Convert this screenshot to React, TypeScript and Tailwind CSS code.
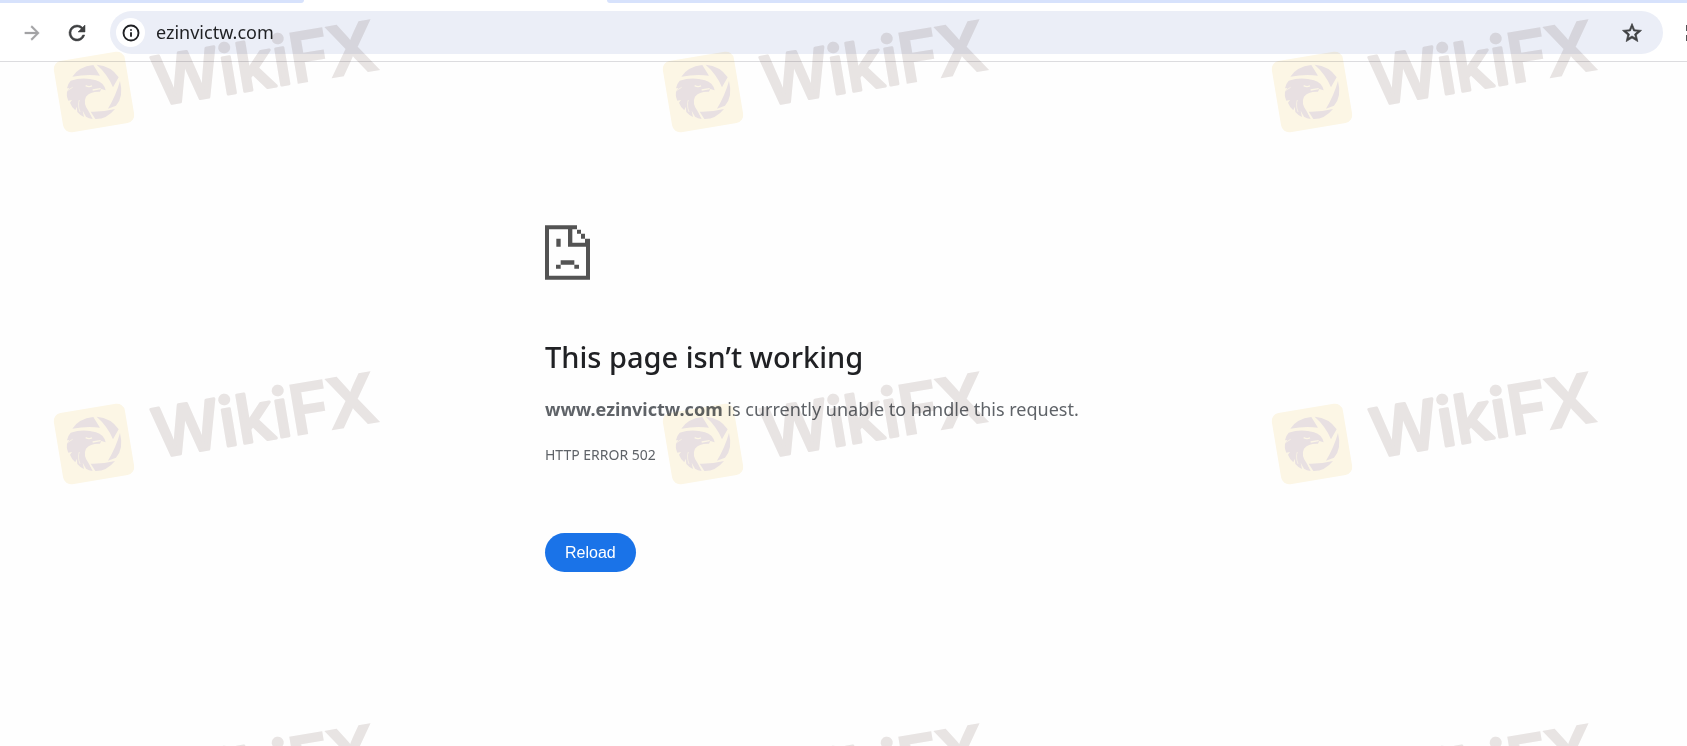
import { Info } from 'lucide-react';

function TabStrip() {
  return (
    <div className="flex h-[3px] bg-white">
      <div className="w-[18%] rounded-br-[20px] bg-[#d7e2fc]" />
      <div className="w-[18%]" />
      <div className="flex-1 rounded-bl-[20px] bg-[#d7e2fc]" />
    </div>
  );
}

function ToolbarIcon({ d, strokeWidth }: { d: string; strokeWidth: number }) {
  return (
    <svg viewBox="0 0 24 24" className="size-6" fill="currentColor" stroke="currentColor" strokeWidth={strokeWidth} aria-hidden="true">
      <path d={d} />
    </svg>
  );
}

function Toolbar() {
  return (
    <header className="flex items-center overflow-hidden border-b border-[#dcdcdf] bg-white pt-2 pb-[7px]">
      <button type="button" aria-label="Forward" className="ml-5 text-[#a3a3a5]">
        <ToolbarIcon strokeWidth={0.3} d="M12 4.6l-1.3 1.3 5.1 5.2H4.8v1.8h11l-5.1 5.2 1.3 1.3 7.4-7.4z" />
      </button>
      <button type="button" aria-label="Reload this page" className="ml-[21px] text-[#3f4042]">
        <ToolbarIcon
          strokeWidth={0.5}
          d="M17.65 6.35A7.96 7.96 0 0 0 12 4a8 8 0 1 0 7.73 10h-2.08A6 6 0 1 1 12 6c1.66 0 3.14.69 4.22 1.78L13 11h7V4z"
        />
      </button>
      <div className="ml-[21px] flex h-[43px] flex-1 items-center rounded-full bg-[#ebeef7] px-[6px]">
        <button type="button" aria-label="View site information" className="flex size-[29px] items-center justify-center rounded-full bg-white text-[#1f2023]">
          <Info size={18} strokeWidth={2.5} />
        </button>
        <input
          type="text"
          aria-label="Address"
          defaultValue="ezinvictw.com"
          className="ml-[11px] min-w-0 flex-1 bg-transparent text-[18px] text-[#1f2023] outline-none"
        />
        <button type="button" aria-label="Bookmark this page" className="mr-[13px] text-[#3f4042]">
          <ToolbarIcon
            strokeWidth={0.7}
            d="M21.5 9.4l-6.9-.6L12 2.5 9.4 8.8l-6.9.6 5.2 4.5-1.5 6.7L12 17l5.8 3.6-1.5-6.7zM12 15l-3.6 2.2 1-4.1-3.2-2.8 4.2-.4L12 6l1.6 3.9 4.2.4-3.2 2.8 1 4.1z"
          />
        </button>
      </div>
      <div className="ml-[23px] w-px">
        <div className="h-[6px] bg-[#55565a]" />
        <div className="mt-1 h-[6px] bg-[#55565a]" />
      </div>
    </header>
  );
}

function SadPageIcon() {
  return (
    <svg viewBox="0 0 135 163" className="h-[55px] w-[45px]" fill="#535353" aria-hidden="true">
      <path d="M0 0H96V13H108V25H120V40H135V163H0ZM12 12V151H123V64H69V12ZM82 12V52H120V40H108V25H96V12Z" fillRule="evenodd" />
      <path d="M34 40H47V64H34ZM47 105H88V118H102V130H88V118H47V130H33V118H47Z" />
    </svg>
  );
}

function ErrorPage() {
  return (
    <main className="mx-auto w-full max-w-[597px] pt-[163px]">
      <SadPageIcon />
      <h1 className="mt-[57px] text-[29px] leading-10 font-medium text-[#202124]">This page isn’t working</h1>
      <p className="mt-[18px] text-[18px] leading-7 text-[#5f6368]">
        <strong className="font-bold">www.ezinvictw.com</strong> is currently unable to handle this request.
      </p>
      <p className="mt-5 text-[14px] leading-6 text-[#5f6368]">HTTP ERROR 502</p>
      <button
        type="button"
        className="mt-[66px] h-[39px] rounded-full bg-[#1a73e8] px-5 font-['Liberation_Sans',sans-serif] text-[16px] text-white"
      >
        Reload
      </button>
    </main>
  );
}

// Eagle head inside a ring of aperture blades
function EagleMark() {
  return (
    <g transform="translate(40 8) scale(0.3333)">
      <g fill="#e9e1e3">
        <path d="M97 206Q116 176 160 171L180 203Q140 198 97 206Z" />
        <path d="M170 170Q214 174 236 208L219 238Q204 200 170 170Z" />
        <path d="M240 219Q252 266 228 293L204 302Q228 262 240 219Z" />
        <path d="M225 303Q200 334 166 333L152 311Q190 312 225 303Z" />
        <path d="M92 218Q130 205 168 217Q192 224 197 247L184 243L180 251Q150 250 138 266Q128 286 146 310L158 333Q146 332 138 326L128 308L132 327Q120 322 112 312L110 296L106 307Q94 296 90 284L96 276L85 278Q78 262 82 248L88 240L81 241Q84 226 92 218Z" />
      </g>
      <g fill="none" stroke="#fdf7e6" strokeWidth="4">
        <path d="M137 233Q146 238 156 234M158 246L182 242" />
        <path d="M82 248L98 238M120 312Q112 290 118 276" strokeWidth="2" />
      </g>
    </g>
  );
}

function WatermarkTile() {
  return (
    <svg viewBox="0 0 609 352" className="h-[352px] w-[609px] overflow-visible">
      <rect x="58" y="56" width="72" height="72" rx="8" fill="#fdf7e6" transform="rotate(-9.5 94 92)" />
      <EagleMark />
      <text
        x="154"
        y="116"
        fontSize="67"
        fill="#e9e5e4"
        stroke="#e9e5e4"
        className="font-['Inter',sans-serif] font-medium"
        transform="rotate(-9.5 94 92)"
      >
        <tspan strokeWidth="3" strokeLinejoin="round">Wiki</tspan>
        <tspan strokeWidth="3">FX</tspan>
      </text>
    </svg>
  );
}

function Watermark() {
  return (
    <div
      aria-hidden="true"
      className="pointer-events-none absolute inset-0 grid auto-rows-[352px] grid-cols-[repeat(3,609px)] overflow-hidden mix-blend-multiply select-none"
    >
      {Array.from({ length: 9 }, (_, i) => (
        <WatermarkTile key={i} />
      ))}
    </div>
  );
}

export default function App() {
  return (
    <div className="relative min-h-screen overflow-hidden bg-[#fefefe] font-['Noto_Sans',sans-serif]">
      <TabStrip />
      <Toolbar />
      <ErrorPage />
      <Watermark />
    </div>
  );
}
